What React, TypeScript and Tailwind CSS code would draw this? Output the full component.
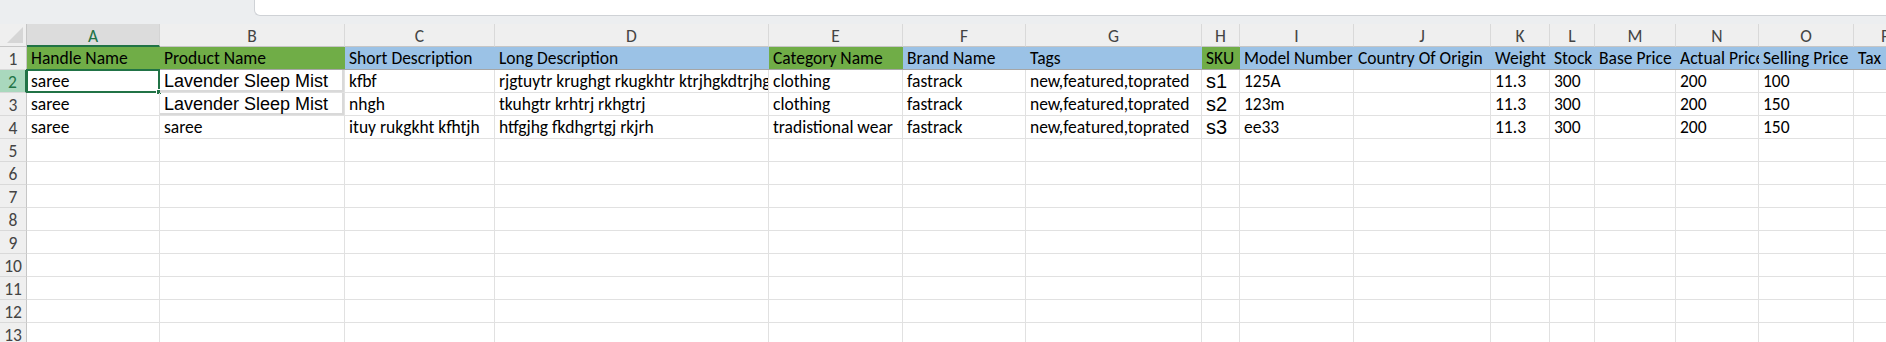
import React from 'react';

type Fill = 'g' | 'b';

interface Cell {
  text?: string;
  arial?: boolean;
  big?: boolean;
  boxed?: boolean;
}

const COLS = ['A', 'B', 'C', 'D', 'E', 'F', 'G', 'H', 'I', 'J', 'K', 'L', 'M', 'N', 'O', 'P'];

const HEADERS: { text: string; fill: Fill }[] = [
  { text: 'Handle Name', fill: 'g' },
  { text: 'Product Name', fill: 'g' },
  { text: 'Short Description', fill: 'b' },
  { text: 'Long Description', fill: 'b' },
  { text: 'Category Name', fill: 'g' },
  { text: 'Brand Name', fill: 'b' },
  { text: 'Tags', fill: 'b' },
  { text: 'SKU', fill: 'g' },
  { text: 'Model Number', fill: 'b' },
  { text: 'Country Of Origin', fill: 'b' },
  { text: 'Weight', fill: 'b' },
  { text: 'Stock', fill: 'b' },
  { text: 'Base Price', fill: 'b' },
  { text: 'Actual Price', fill: 'b' },
  { text: 'Selling Price', fill: 'b' },
  { text: 'Tax', fill: 'b' },
];

const ROWS: Cell[][] = [
  [
    { text: 'saree' },
    { text: 'Lavender Sleep Mist', arial: true, boxed: true },
    { text: 'kfbf' },
    { text: 'rjgtuytr krughgt rkugkhtr ktrjhgkdtrjhg' },
    { text: 'clothing' },
    { text: 'fastrack' },
    { text: 'new,featured,toprated' },
    { text: 's1', arial: true, big: true },
    { text: '125A' },
    {},
    { text: '11.3' },
    { text: '300' },
    {},
    { text: '200' },
    { text: '100' },
    {},
  ],
  [
    { text: 'saree' },
    { text: 'Lavender Sleep Mist', arial: true, boxed: true },
    { text: 'nhgh' },
    { text: 'tkuhgtr krhtrj rkhgtrj' },
    { text: 'clothing' },
    { text: 'fastrack' },
    { text: 'new,featured,toprated' },
    { text: 's2', arial: true, big: true },
    { text: '123m' },
    {},
    { text: '11.3' },
    { text: '300' },
    {},
    { text: '200' },
    { text: '150' },
    {},
  ],
  [
    { text: 'saree' },
    { text: 'saree' },
    { text: 'ituy rukgkht kfhtjh' },
    { text: 'htfgjhg fkdhgrtgj rkjrh' },
    { text: 'tradistional wear' },
    { text: 'fastrack' },
    { text: 'new,featured,toprated' },
    { text: 's3', arial: true, big: true },
    { text: 'ee33' },
    {},
    { text: '11.3' },
    { text: '300' },
    {},
    { text: '200' },
    { text: '150' },
    {},
  ],
];

// row header + columns A..P
const GRID =
  'grid grid-cols-[27px_133px_185px_150px_274px_134px_123px_176px_38px_114px_137px_59px_45px_81px_83px_95px_64px] auto-rows-[23px]';

const calibri = "font-['Carlito','Lato','Noto_Sans',sans-serif]";

export default function App() {
  return (
    <div className="h-[342px] w-[1886px] overflow-hidden bg-white">
      {/* top strip with formula bar edge */}
      <div className="flex h-[24px] bg-[#eceef0]">
        <div className="w-[254px]" />
        <div className="h-[16px] flex-1 rounded-bl-[6px] border-b border-l border-[#cfd2d6] bg-white" />
      </div>

      <div className={`${GRID} ${calibri} text-[17.5px] leading-[18px] text-black`}>
        {/* column letters */}
        <div className="relative border-r border-b border-[#c6c6c6] bg-[#efefef]">
          <svg className="absolute right-[3px] bottom-[3px]" width="16" height="16" viewBox="0 0 16 16">
            <polygon points="16,0 16,16 0,16" fill="#d6d6d6" />
          </svg>
        </div>
        {COLS.map((c, i) =>
          i === 0 ? (
            <div
              key={c}
              className="flex items-center justify-center border-r border-b-2 border-r-[#d4d4d4] border-b-[#217346] bg-[#dcdcdc] pt-[2px] text-[#217346]"
            >
              {c}
            </div>
          ) : (
            <div
              key={c}
              className="flex items-center justify-center border-r border-b border-r-[#d9d9d9] border-b-[#c6c6c6] bg-[#efefef] pt-[2px] text-[#444]"
            >
              {c}
            </div>
          ),
        )}

        {/* row 1 - headers */}
        <div className="flex items-center justify-center border-r border-b border-r-[#c6c6c6] border-b-[#d9d9d9] bg-[#efefef] pt-[2px] text-[#444]">
          1
        </div>
        {HEADERS.map((h) => (
          <div
            key={h.text}
            className={`flex items-end overflow-hidden whitespace-nowrap border-b border-[#a6a6a6] pb-[2px] pl-[4px] ${
              h.fill === 'g' ? 'bg-[#70ad47]' : 'bg-[#9bc2e6]'
            }`}
          >
            {h.text}
          </div>
        ))}

        {/* data rows */}
        {ROWS.map((row, r) => (
          <React.Fragment key={r}>
            <div
              className={`flex items-center justify-center border-b pt-[2px] ${
                r === 0
                  ? 'border-r-2 border-r-[#217346] border-b-[#d9d9d9] bg-[#a9d8bd] text-[#217346]'
                  : 'border-r border-r-[#c6c6c6] border-b-[#d9d9d9] bg-[#efefef] text-[#444]'
              }`}
            >
              {r + 2}
            </div>
            {row.map((cell, c) => {
              const active = r === 0 && c === 0;
              return (
                <div
                  key={c}
                  className={`relative flex items-end whitespace-nowrap border-r border-b border-[#e1e1e1] pb-[2px] pl-[4px] ${
                    active ? '' : 'overflow-hidden'
                  } ${cell.boxed ? 'shadow-[inset_-2px_-2px_0_#d9d9d9]' : ''} ${
                    cell.arial ? "font-['Liberation_Sans',Arial,sans-serif] text-[18px]" : ''
                  } ${cell.big ? 'text-[20px]' : ''}`}
                >
                  {cell.text}
                  {active && (
                    <div className="pointer-events-none absolute -top-[1px] -left-[1px] -right-[1px] -bottom-[1px] border-2 border-[#217346]">
                      <div className="absolute -right-[4px] -bottom-[4px] h-[6px] w-[6px] border border-white bg-[#217346]" />
                    </div>
                  )}
                </div>
              );
            })}
          </React.Fragment>
        ))}

        {/* empty rows */}
        {Array.from({ length: 9 }, (_, i) => (
          <React.Fragment key={`e${i}`}>
            <div className="flex items-center justify-center border-r border-b border-r-[#c6c6c6] border-b-[#d9d9d9] bg-[#efefef] pt-[2px] text-[#444]">
              {i + 5}
            </div>
            {COLS.map((c) => (
              <div key={c} className="border-r border-b border-[#e1e1e1]" />
            ))}
          </React.Fragment>
        ))}
      </div>
    </div>
  );
}
